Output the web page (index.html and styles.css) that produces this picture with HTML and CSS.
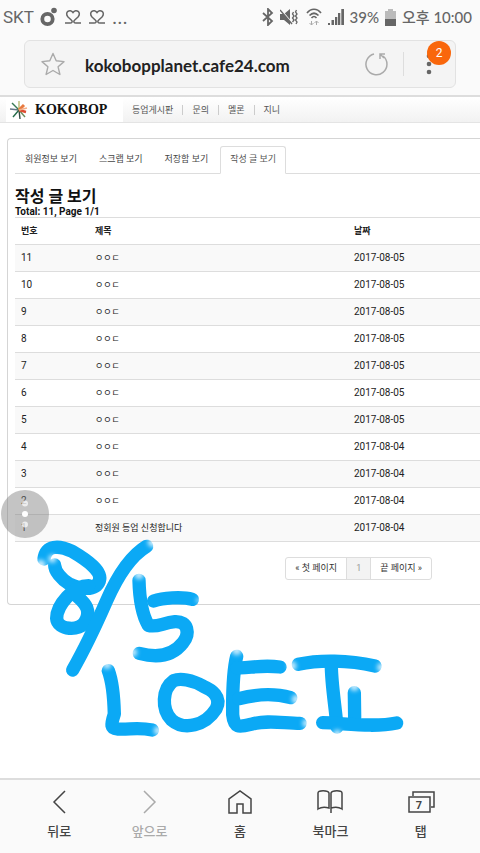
FILE: index.html
```html
<!DOCTYPE html>
<html lang="ko">
<head>
  <meta charset="utf-8">
  <meta name="viewport" content="width=device-width, initial-scale=1">
  <title>작성 글 보기</title>
  <link rel="stylesheet" href="styles.css">
</head>
<body>
  <header class="browser">
    <div class="status">
      <div class="status-left">
        <span class="carrier">SKT</span>
        <svg width="18" height="20" viewBox="0 0 18 20"><circle cx="7.500" cy="12" r="5.200" fill="none" stroke="#666" stroke-width="3.800"/><circle cx="14" cy="3.500" r="2.800" fill="#666"/></svg>
        <svg class="heart" width="18" height="16" viewBox="0 0 18 16"><path d="M1 14h5c2 0 3-1.500 1.500-2.700L4 8C0 3.500 6-1 9 3.500c3-4.500 9 0 5 4.500l-3.500 3.300C9 12.500 10 14 12 14h5"/></svg>
        <svg class="heart" width="18" height="16" viewBox="0 0 18 16"><path d="M1 14h5c2 0 3-1.500 1.500-2.700L4 8C0 3.500 6-1 9 3.500c3-4.500 9 0 5 4.500l-3.500 3.300C9 12.500 10 14 12 14h5"/></svg>
        <span class="dots">...</span>
      </div>
      <div class="status-right">
        <svg width="12" height="18" viewBox="0 0 12 18"><path d="M1 5l9 8-4 4V1l4 4-9 8" fill="none" stroke="#666" stroke-width="1.800"/></svg>
        <svg width="18" height="16" viewBox="0 0 18 16"><path d="M0 5h4l6-5v16l-6-5H0z" fill="#666"/><path d="M1 1l11 13" stroke="#fafafa" stroke-width="1.500"/><path d="M0 1l12 14" stroke="#666" stroke-width="1.400"/><path d="M13.500 3l-1 2 1.500 2-1.500 2 1.500 2-1.500 2M16.500 1l-1 2 1.500 2-1.500 2 1.500 2-1.500 2 1.500 2-1 2" fill="none" stroke="#666" stroke-width="1.300"/></svg>
        <svg class="wifi" width="16" height="18" viewBox="0 0 16 18"><path d="M1 5c4-5 10-5 14 0M3.500 7.500c3-3 6-3 9 0M5.500 10c2-2 3-2 5 0" fill="none" stroke="#666" stroke-width="1.700"/><path d="M5.500 13v4m-2-2l2 2 2-2M10.500 17v-4m-2 2l2-2 2 2" fill="none" stroke="#aaa"/></svg>
        <svg width="16" height="16" viewBox="0 0 16 16"><path d="M0 16v-2h2v2zM3.500 16v-5H6v5zM7 16V8h2.300v8zM10 16V4h2.300v12zM13.300 16V0H16v16z" fill="#666"/></svg>
        <span>39%</span>
        <svg width="11" height="17" viewBox="0 0 11 17"><path d="M3 0h5v2h3v9H0V2h3z" fill="#bbb"/><path d="M0 10h11v7H0z" fill="#666"/></svg>
        <span>오후 10:00</span>
      </div>
    </div>
    <div class="address-bar">
      <button class="icon-button" type="button" aria-label="북마크 추가">
        <svg width="24" height="24" viewBox="0 0 24 24"><path d="M12 1.500l3.200 7.300 7.800.8-5.900 5.200 1.800 7.700L12 18.500l-6.900 4 1.800-7.700L1 9.600l7.800-.8z" fill="none" stroke="#aaa" stroke-width="1.400" stroke-linejoin="round"/></svg>
      </button>
      <input class="address" type="text" aria-label="주소" value="kokobopplanet.cafe24.com">
      <button class="icon-button reload" type="button" aria-label="새로고침">
        <svg width="24" height="24" viewBox="0 0 24 24"><path d="M10 2a10.500 10.500 0 1 0 9 2" fill="none" stroke="#aaa" stroke-width="1.500"/><path d="M16 7V2h5M16 2l4 4" fill="none" stroke="#aaa" stroke-width="1.500"/></svg>
      </button>
      <button class="icon-button menu" type="button" aria-label="메뉴">
        <svg width="6" height="22" viewBox="0 0 6 22"><g fill="#666"><circle cx="3" cy="3" r="2.300"/><circle cx="3" cy="11" r="2.300"/><circle cx="3" cy="19" r="2.300"/></g></svg>
        <span class="badge">2</span>
      </button>
    </div>
  </header>

  <nav class="site-nav">
    <a class="brand" href="#">
      <svg width="20" height="20" viewBox="0 0 20 20"><g fill="none" stroke-width="1.400"><path d="M10 10L1 9" stroke="#678"/><path d="M10 10L3 3" stroke="#397a55"/><path d="M10 10V1" stroke="#b9bc74"/><path d="M10 10L4 17" stroke="#246b49"/><path d="M10 10l1 9" stroke="#334e45"/><path d="M10 10l6 7" stroke="#6b8b5b"/><path d="M10 10l7 2" stroke="#dd4b30" stroke-width="2.500"/><path d="M10 10l5-5" stroke="#e87a40" stroke-width="3"/><path d="M10 10l8-2" stroke="#f3ae88"/></g></svg>
      <span>KOKOBOP</span>
    </a>
    <a class="site-link" href="#">등업게시판</a>
    <a class="site-link" href="#">문의</a>
    <a class="site-link" href="#">멜론</a>
    <a class="site-link" href="#">지니</a>
  </nav>

  <main class="content">
    <section class="panel">
      <nav class="tabs">
        <a class="tab" href="#">회원정보 보기</a>
        <a class="tab" href="#">스크랩 보기</a>
        <a class="tab" href="#">저장함 보기</a>
        <a class="tab active" href="#">작성 글 보기</a>
      </nav>
      <h1 class="title">작성 글 보기</h1>
      <p class="total">Total: 11, Page 1/1</p>
      <table class="posts">
        <thead>
          <tr><th class="col-no">번호</th><th class="col-subject">제목</th><th>날짜</th></tr>
        </thead>
        <tbody>
          <tr><td class="num">11</td><td>ㅇㅇㄷ</td><td class="num">2017-08-05</td></tr>
          <tr><td class="num">10</td><td>ㅇㅇㄷ</td><td class="num">2017-08-05</td></tr>
          <tr><td class="num">9</td><td>ㅇㅇㄷ</td><td class="num">2017-08-05</td></tr>
          <tr><td class="num">8</td><td>ㅇㅇㄷ</td><td class="num">2017-08-05</td></tr>
          <tr><td class="num">7</td><td>ㅇㅇㄷ</td><td class="num">2017-08-05</td></tr>
          <tr><td class="num">6</td><td>ㅇㅇㄷ</td><td class="num">2017-08-05</td></tr>
          <tr><td class="num">5</td><td>ㅇㅇㄷ</td><td class="num">2017-08-05</td></tr>
          <tr><td class="num">4</td><td>ㅇㅇㄷ</td><td class="num">2017-08-04</td></tr>
          <tr><td class="num">3</td><td>ㅇㅇㄷ</td><td class="num">2017-08-04</td></tr>
          <tr><td class="num">2</td><td>ㅇㅇㄷ</td><td class="num">2017-08-04</td></tr>
          <tr><td class="num">1</td><td>정회원 등업 신청합니다</td><td class="num">2017-08-04</td></tr>
        </tbody>
      </table>
      <nav class="pager">
        <a class="page" href="#">« 첫 페이지</a>
        <a class="page current" href="#">1</a>
        <a class="page" href="#">끝 페이지 »</a>
      </nav>
    </section>

    <button class="floating" type="button" aria-label="더보기">
      <svg width="8" height="28" viewBox="0 0 8 28"><g fill="#fff"><circle cx="4" cy="3.500" r="3" opacity="0.700"/><circle cx="4" cy="14" r="3"/><circle cx="4" cy="24.500" r="3" opacity="0.700"/></g></svg>
    </button>

    <!-- freehand marker drawing -->
    <svg class="marker" width="400" height="220" viewBox="0 0 1200 660" aria-hidden="true">
      <defs>
        <filter id="fade" x="-10%" y="-10%" width="120%" height="120%"><feGaussianBlur stdDeviation="7"/></filter>
        <!-- strokes get thinner ink where the marker touches down or lifts -->
        <mask id="ink" maskUnits="userSpaceOnUse" x="0" y="0" width="1200" height="660">
          <rect width="1200" height="660" fill="#fff"/>
          <g fill="#000" opacity="0.750" filter="url(#fade)">
            <circle cx="62" cy="104" r="15"/><circle cx="97" cy="86" r="12"/><circle cx="398" cy="37" r="15"/><circle cx="357" cy="134" r="14"/><circle cx="339" cy="367" r="13"/><circle cx="261" cy="404" r="13"/><circle cx="414" cy="602" r="13"/><circle cx="650" cy="361" r="15"/><circle cx="829" cy="508" r="14"/><circle cx="816" cy="408" r="14"/><circle cx="1084" cy="412" r="13"/><circle cx="1003" cy="469" r="14"/><circle cx="952" cy="612" r="13"/><circle cx="859" cy="580" r="12"/><circle cx="535" cy="211" r="7"/>
          </g>
        </mask>
      </defs>
      <g fill="none" stroke="#0ba9f5" stroke-width="40" stroke-linecap="round" stroke-linejoin="round" mask="url(#ink)">
        <path d="M72 87C78 45 116 45 156 64C202 91 248 124 238 153C226 184 180 178 148 162C124 148 104 123 104 105"/>
        <path d="M206 167C160 167 110 226 110 265C112 301 181 305 195 275C215 242 196 220 173 200"/>
        <path d="M380 49C330 79 294 135 260 212C228 285 202 343 158 420"/>
        <path d="M357 151C358 192 363 248 385 286C409 294 427 279 465 275C505 273 510 312 489 338C462 373 421 387 358 370"/>
        <path d="M401 213C427 204 485 199 517 208"/>
        <path d="M265 422C280 462 282 511 283 552C272 586 272 596 293 597C329 599 355 591 397 600"/>
        <path d="M461 452C426 477 424 538 454 569C493 603 556 587 588 537C607 500 574 479 550 469C516 449 480 444 461 452"/>
        <path d="M650 379C636 436 638 510 638 554C642 595 657 592 693 583C739 569 791 580 840 580"/>
        <path d="M650 413C682 417 717 403 780 411"/>
        <path d="M656 506C707 493 758 488 812 503"/>
        <path d="M835 403C897 389 985 390 1065 408"/>
        <path d="M934 406C934 463 946 529 951 591"/>
        <path d="M1003 488L1004 563"/>
        <path d="M908 578C970 579 1059 594 1130 579"/>
      </g>
    </svg>
  </main>

  <footer class="toolbar">
    <button class="tool" type="button">
      <svg width="28" height="26" viewBox="0 0 28 26"><path d="M20 2L9 13l11 11"/></svg>
      <span>뒤로</span>
    </button>
    <button class="tool" type="button" disabled>
      <svg width="28" height="26" viewBox="0 0 28 26"><path d="M8 2l11 11L8 24"/></svg>
      <span>앞으로</span>
    </button>
    <button class="tool" type="button">
      <svg width="28" height="26" viewBox="0 0 28 26"><path d="M3 24V10l11-8 11 8v14h-8v-9h-6v9z"/></svg>
      <span>홈</span>
    </button>
    <button class="tool" type="button">
      <svg width="28" height="26" viewBox="0 0 28 26"><path d="M13 19V4c-1-3-11-3-11 0v16c3-2 8-2 11-1zM15 24V4c1-3 11-3 11 0v16c-3-2-8-2-11-1"/></svg>
      <span>북마크</span>
    </button>
    <button class="tool" type="button">
      <svg width="28" height="26" viewBox="0 0 28 26"><path d="M2 8h21v15H2zM6 7V3h21v15h-3"/><text x="12" y="20" text-anchor="middle">7</text></svg>
      <span>탭</span>
    </button>
  </footer>
</body>
</html>
```

FILE: styles.css
```css
* {
  box-sizing: border-box;
}

body {
  display: flex;
  flex-direction: column;
  min-height: 100vh;
  margin: 0;
  background-color: #fff;
  color: #222;
  font-family: Roboto, "Noto Sans CJK KR", sans-serif;
  font-size: 9px;
  line-height: 16px;
  overflow-x: hidden;
}

a {
  color: inherit;
  text-decoration: none;
}

button {
  margin: 0;
  padding: 0;
  border: none;
  background: none;
  font-family: inherit;
}

svg {
  display: block;
  flex: none;
}

.browser {
  padding-bottom: 7px;
  background-color: #fafafa;
  border-bottom: 2px solid #ddd;
}

.status {
  display: flex;
  align-items: center;
  justify-content: space-between;
  height: 40px;
  padding: 0 8px 6px 3px;
  color: #666;
  font-size: 17px;
}

.status-left,
.status-right {
  display: flex;
  align-items: center;
  gap: 6px;
}

.status-right {
  font-family: Lato, "Noto Sans CJK KR", sans-serif;
  font-size: 15px;
  font-weight: 500;
  white-space: nowrap;
}

.heart {
  fill: none;
  stroke: #666;
  stroke-width: 1.5;
}

.wifi {
  margin-left: 2px;
}

.dots {
  font-size: 20px;
}

.address-bar {
  display: flex;
  align-items: center;
  height: 48px;
  margin: 0 24px;
  padding: 0 16px;
  border: 1px solid #e2e2e2;
  border-radius: 6px;
  background-color: #f4f4f4;
}

.icon-button {
  position: relative;
  display: flex;
  align-items: center;
  justify-content: center;
  height: 24px;
}

.address {
  flex: 1;
  min-width: 0;
  margin-left: 20px;
  padding: 3px 0 0;
  border: none;
  background: none;
  color: #222;
  font-family: Lato, sans-serif;
  font-size: 17px;
  font-weight: bold;
  outline: none;
}

.reload {
  padding-right: 15px;
}

.menu {
  width: 36px;
  padding-left: 14px;
  border-left: 1px solid #ddd;
}

.badge {
  position: absolute;
  top: -11px;
  right: -12px;
  width: 24px;
  height: 24px;
  border-radius: 50%;
  background-color: #f9670c;
  color: #fff;
  font-size: 12px;
  line-height: 24px;
  text-align: center;
}

.site-nav {
  display: flex;
  align-items: center;
  height: 26px;
  padding-left: 6px;
  border-bottom: 1px solid #e4e4e4;
  background: linear-gradient(#fff, #f2f2f2);
  color: #555;
}

.brand {
  display: flex;
  align-items: center;
  gap: 6px;
  width: 117px;
  height: 25px;
  padding-left: 3px;
  background-color: #fff;
  color: #111;
  font-family: "Liberation Serif", serif;
  font-size: 14px;
  font-weight: bold;
}

.site-link {
  padding: 0 9px;
  line-height: 10px;
}

.site-link + .site-link {
  border-left: 1px solid #ccc;
}

.content {
  position: relative;
  flex: 1;
  padding: 15px 0 0 7px;
}

/* the panel runs off the right side of the screen */
.panel {
  padding: 7px 0 24px 7px;
  border: 1px solid #d5d5d5;
  border-right: none;
  border-radius: 4px 0 0 4px;
}

.tabs {
  display: flex;
  border-bottom: 1px solid #ddd;
}

.tab {
  margin-bottom: -1px;
  padding: 4px 9px 6px;
  border: 1px solid transparent;
  border-radius: 3px 3px 0 0;
  color: #444;
}

.tab + .tab {
  margin-left: 2px;
}

.tab.active {
  border-color: #ddd #ddd #fff;
  background-color: #fff;
  color: #555;
}

.title {
  margin: 13px 0 0;
  color: #111;
  font-size: 16px;
  font-weight: bold;
  line-height: 20px;
}

.total {
  margin: 0;
  color: #111;
  font-size: 10px;
  font-weight: bold;
  line-height: 10px;
}

.posts {
  width: 100%;
  border-collapse: collapse;
  table-layout: fixed;
}

.posts th,
.posts td {
  padding: 5px 6px;
  border-top: 1px solid #ddd;
  text-align: left;
}

.posts .num {
  font-size: 10px;
}

.posts tbody tr:nth-child(odd) {
  background-color: #f9f9f9;
}

.posts tbody tr:last-child td {
  border-bottom: 1px solid #ddd;
}

.posts .col-no {
  width: 74px;
}

.posts .col-subject {
  width: 259px;
}

.pager {
  display: flex;
  justify-content: flex-end;
  margin: 15px 48px 0 0;
}

.page {
  padding: 2px 9px 3px;
  border: 1px solid #ddd;
  color: #333;
}

.page + .page {
  margin-left: -1px;
}

.page:first-child {
  border-radius: 3px 0 0 3px;
}

.page:last-child {
  border-radius: 0 3px 3px 0;
}

.page.current {
  background-color: #f3f3f3;
  color: #999;
}

.floating {
  position: absolute;
  top: 367px;
  left: 1px;
  display: flex;
  align-items: center;
  justify-content: center;
  width: 48px;
  height: 48px;
  border-radius: 50%;
  background-color: rgba(125, 125, 125, 0.45);
}

.marker {
  position: absolute;
  top: 407px;
  left: 20px;
  pointer-events: none;
}

.toolbar {
  display: flex;
  height: 75px;
  padding: 0 14px;
  border-top: 2px solid #ddd;
  background-color: #fafafa;
}

.tool {
  display: flex;
  flex: 1;
  flex-direction: column;
  align-items: center;
  gap: 7px;
  padding-top: 9px;
  color: #444;
  font-size: 13px;
  font-weight: 500;
  line-height: 20px;
}

.tool svg {
  fill: none;
  stroke: currentColor;
  stroke-width: 1.5;
}

.tool text {
  fill: currentColor;
  stroke: none;
  font-size: 11px;
  font-weight: bold;
}

.tool:disabled {
  color: #aaa;
}
```
